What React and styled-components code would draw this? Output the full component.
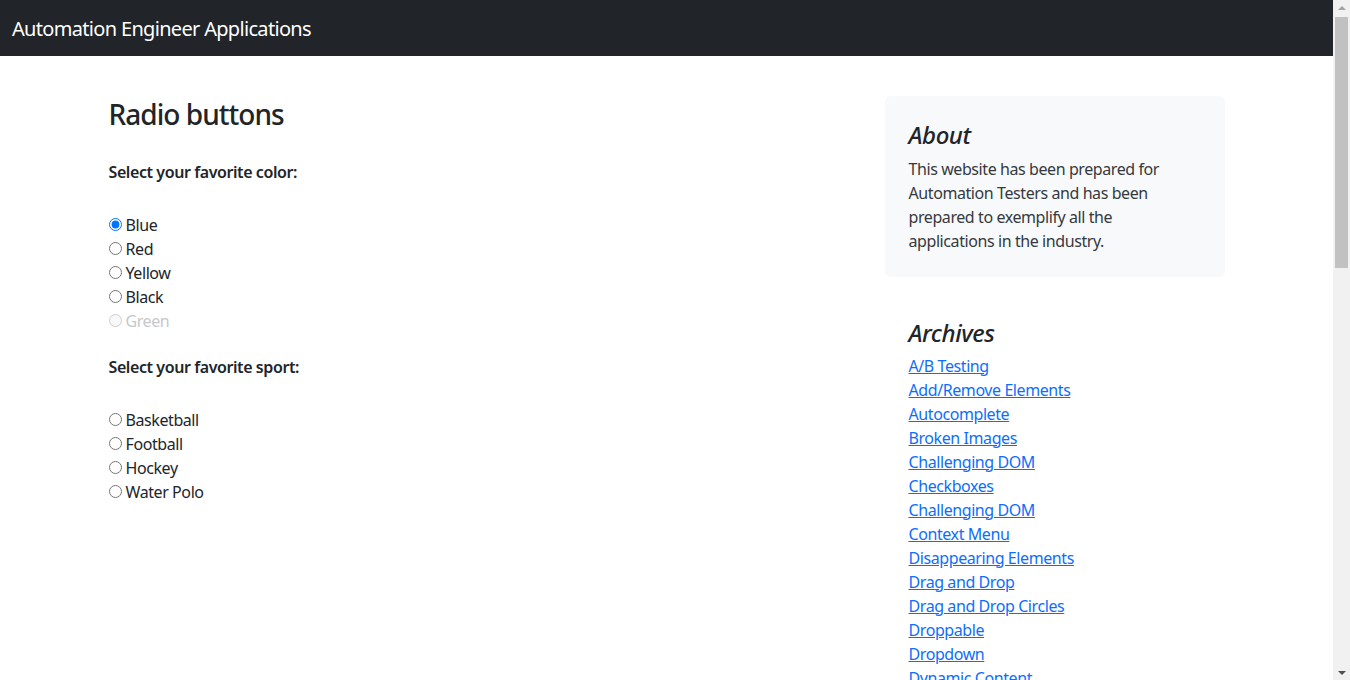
import React from "react";
import styled, { createGlobalStyle } from "styled-components";

const GlobalStyle = createGlobalStyle`
  html, body { margin: 0; padding: 0; overflow: hidden; }
  body {
    font-family: "Noto Sans", "Open Sans", sans-serif;
    font-size: 16px;
    line-height: 1.5;
    letter-spacing: -0.026em;
    color: #212529;
    background: #fff;
  }
`;

const Page = styled.div`
  width: calc(100vw - 17px);
  height: 100vh;
  overflow: hidden;
`;

const Navbar = styled.header`
  height: 56px;
  background: #212529;
  display: flex;
  align-items: center;
  padding: 0 12px;
`;

const Brand = styled.span`
  color: #fff;
  font-size: 20px;
  line-height: 30px;
  letter-spacing: -0.034em;
  margin-top: 2px;
`;

const Container = styled.main`
  max-width: 1116px;
  margin: 0 auto;
  padding: 40px 12px 0;
  display: grid;
  grid-template-columns: 1fr 340px;
  column-gap: 24px;
  align-items: start;
`;

const Content = styled.section`
  display: flex;
  flex-direction: column;
`;

const Title = styled.h3`
  font-size: 28px;
  font-weight: 500;
  line-height: 1.2;
  letter-spacing: -0.034em;
  margin: 2px 0 28px;
`;

const GroupLabel = styled.p`
  font-weight: 600;
  margin: 0 0 29px;
  line-height: 24px;
`;

const RadioList = styled.div`
  display: flex;
  flex-direction: column;
  margin-bottom: ${(p) => p.$mb || 0}px;
`;

const RadioRow = styled.label`
  display: flex;
  align-items: center;
  height: 24px;
  color: ${(p) => (p.$disabled ? "#c6c8ca" : "#212529")};
`;

const Radio = styled.input.attrs({ type: "radio" })`
  width: 13px;
  height: 13px;
  margin: 0 4px 0 0;
`;

const Sidebar = styled.aside`
  display: flex;
  flex-direction: column;
`;

const AboutBox = styled.div`
  background: #f8f9fa;
  border-radius: 6px;
  padding: 24px;
  margin-bottom: 16px;
`;

const SideTitle = styled.h4`
  font-size: 24px;
  font-style: italic;
  font-weight: 500;
  line-height: 1.2;
  margin: 1px 0 ${(p) => (p.$mb !== undefined ? p.$mb : 7)}px;
`;

const AboutText = styled.p`
  margin: 0;
  color: #343a40;
`;

const Archives = styled.div`
  padding: 25px 24px 24px;
`;

const LinkList = styled.ol`
  list-style: none;
  padding: 0;
  margin: 0;
  display: flex;
  flex-direction: column;
`;

const ArchiveLink = styled.a`
  color: #0d6efd;
  text-decoration: underline;
  line-height: 24px;
`;

const ScrollBar = styled.div`
  position: fixed;
  top: 0;
  right: 0;
  width: 17px;
  height: 100vh;
  background: #f1f1f1;
  display: flex;
  flex-direction: column;
`;

const ScrollArrow = styled.div`
  height: 17px;
  display: flex;
  align-items: center;
  justify-content: center;
  &::before {
    content: "";
    width: 0;
    height: 0;
    border-left: 4px solid transparent;
    border-right: 4px solid transparent;
    ${(p) =>
      p.$down
        ? "border-top: 4px solid #505050; margin-top: 2px;"
        : "border-bottom: 4px solid #a3a3a3; margin-bottom: 2px;"}
  }
`;

const ScrollTrack = styled.div`
  flex: 1;
  padding: 0 2px;
`;

const ScrollThumb = styled.div`
  height: 251px;
  background: #c1c1c1;
`;

const colors = [
  { label: "Blue", checked: true },
  { label: "Red" },
  { label: "Yellow" },
  { label: "Black" },
  { label: "Green", disabled: true },
];

const sports = ["Basketball", "Football", "Hockey", "Water Polo"];

const links = [
  "A/B Testing",
  "Add/Remove Elements",
  "Autocomplete",
  "Broken Images",
  "Challenging DOM",
  "Checkboxes",
  "Challenging DOM",
  "Context Menu",
  "Disappearing Elements",
  "Drag and Drop",
  "Drag and Drop Circles",
  "Droppable",
  "Dropdown",
  "Dynamic Content",
];

export default function App() {
  return (
    <>
      <GlobalStyle />
      <Page>
        <Navbar>
          <Brand>Automation Engineer Applications</Brand>
        </Navbar>
        <Container>
          <Content>
            <Title>Radio buttons</Title>
            <GroupLabel>Select your favorite color:</GroupLabel>
            <RadioList $mb={22}>
              {colors.map((c) => (
                <RadioRow key={c.label} $disabled={c.disabled}>
                  <Radio
                    name="color"
                    defaultChecked={!!c.checked}
                    disabled={!!c.disabled}
                  />
                  {c.label}
                </RadioRow>
              ))}
            </RadioList>
            <GroupLabel>Select your favorite sport:</GroupLabel>
            <RadioList>
              {sports.map((s) => (
                <RadioRow key={s}>
                  <Radio name="sport" />
                  {s}
                </RadioRow>
              ))}
            </RadioList>
          </Content>
          <Sidebar>
            <AboutBox>
              <SideTitle>About</SideTitle>
              <AboutText>
                This website has been prepared for Automation Testers and has
                been prepared to exemplify all the applications in the
                industry.
              </AboutText>
            </AboutBox>
            <Archives>
              <SideTitle $mb={6}>Archives</SideTitle>
              <LinkList>
                {links.map((l, i) => (
                  <li key={i}>
                    <ArchiveLink href="#">{l}</ArchiveLink>
                  </li>
                ))}
              </LinkList>
            </Archives>
          </Sidebar>
        </Container>
      </Page>
      <ScrollBar aria-hidden="true">
        <ScrollArrow />
        <ScrollTrack>
          <ScrollThumb />
        </ScrollTrack>
        <ScrollArrow $down />
      </ScrollBar>
    </>
  );
}
